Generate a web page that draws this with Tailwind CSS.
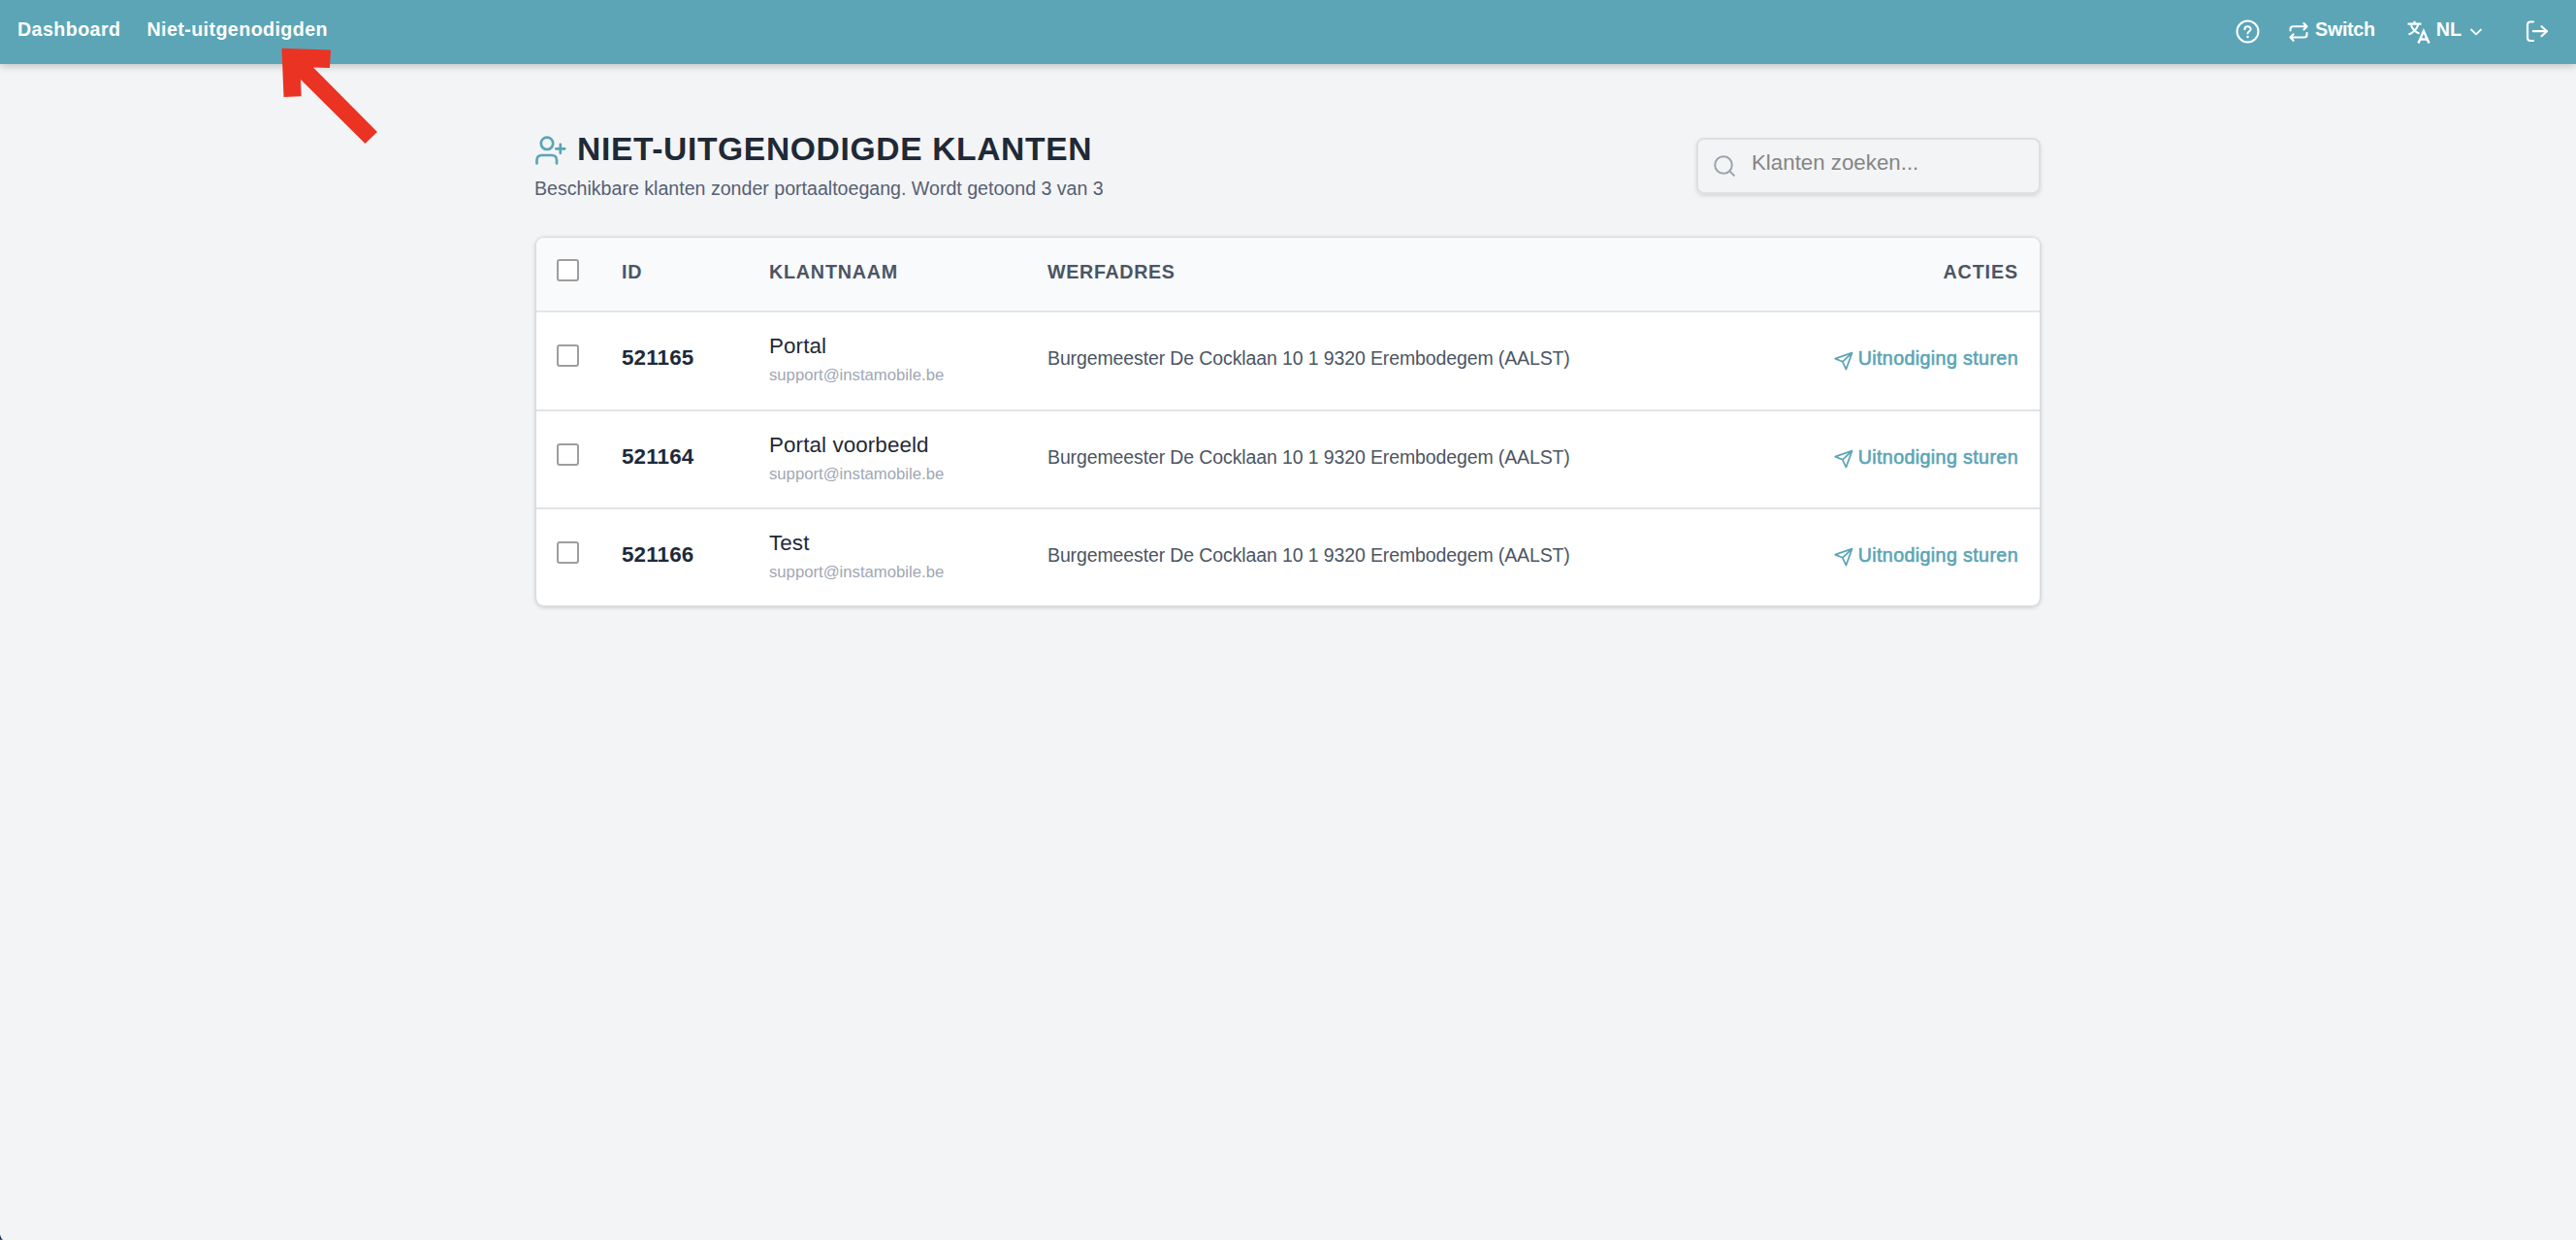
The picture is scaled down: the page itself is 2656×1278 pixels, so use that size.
<!DOCTYPE html>
<html lang="nl">
<head>
    <meta charset="UTF-8">
    <meta name="viewport" content="width=device-width, initial-scale=1.0">
    <title>Niet-uitgenodigde klanten</title>
    <script src="https://cdn.jsdelivr.net/npm/@tailwindcss/browser@4"></script>
</head>
<body class="relative h-[1278px] overflow-hidden bg-[#f3f4f6] font-['Liberation_Sans',Arial,sans-serif] text-[#1f2937]">

    <!-- icons -->
    <svg class="hidden">
        <symbol id="send" viewBox="0 0 20 20">
            <path d="M18.6 1.6 1.2 7.6l7.6 3.2 3.6 7.8zM18.6 1.6 8.8 10.8M1.2 7.6 18.6 1.6" fill="none" stroke="currentColor" stroke-width="1.7" stroke-linejoin="round"/>
        </symbol>
    </svg>

    <header class="flex h-[66px] items-center justify-between bg-[#5ba5b6] pr-7 pl-[18px] text-[19.7px] font-bold text-white shadow-[0_2px_8px_rgba(0,0,0,0.22)]">
        <nav class="flex gap-[27px] pb-[5px] tracking-[0.4px]">
            <a href="#">Dashboard</a>
            <a href="#">Niet-uitgenodigden</a>
        </nav>
        <div class="flex items-center">
            <svg class="mr-[30px] size-[25px]" viewBox="0 0 26 26" fill="none" stroke="currentColor" stroke-width="2.1" stroke-linecap="round">
                <circle cx="13" cy="13" r="11.4"/>
                <path d="M9.8 10.6c0-4 6.4-4 6.4-.2 0 2.5-3.2 2.6-3.2 4.6"/>
                <path d="M13 18.6v.1" stroke-width="2.6"/>
            </svg>
            <a href="#" class="flex items-center">
                <svg class="mr-[7px] h-[22px] w-5" viewBox="0 0 20 22" fill="none" stroke="currentColor" stroke-width="2.1" stroke-linecap="round" stroke-linejoin="round">
                    <path d="M1.5 9.500V8q0-2.800 2.800-2.800H18M15.400 2 18.500 5.200l-3.100 3.200"/>
                    <path d="M18.500 12v1.700q0 2.800-2.800 2.800H2M4.600 13.300 1.500 16.500l3.100 3.300"/>
                </svg>
                <span class="pb-[5px] tracking-[-0.3px]">Switch</span>
            </a>
            <a href="#" class="ml-[33px] flex items-center">
                <svg class="mr-[6px] size-6" viewBox="0 0 24 24" fill="none" stroke="currentColor" stroke-width="2.1">
                    <path d="M.5 3.600h14M7.500.7v2.900M3.800 4.200c1.300 4.600 4.600 7.800 8.700 9.400M11.300 4.200C9.900 9 6.200 12.600 1.500 14.400"/>
                    <path d="m11.500 23.500 5.400-12.600 5.600 12.600M13.300 19.500h7.400" stroke-width="2.4"/>
                </svg>
                <span class="pb-[5px]">NL</span>
                <svg class="ml-2 h-2 w-[14px]" viewBox="0 0 14 8" fill="none" stroke="currentColor" stroke-width="1.8" stroke-linecap="round" stroke-linejoin="round"><path d="m2 1.500 5 4.800 5-4.800"/></svg>
            </a>
            <svg class="ml-[44px] h-[23px] w-6" viewBox="0 0 24 23" fill="none" stroke="currentColor" stroke-width="2.2" stroke-linecap="round" stroke-linejoin="round">
                <path d="M8 1.500H5Q2 1.500 2 4.500v13.500q0 3 3 3H8M7.800 11.200h14M16.500 6.200l5.500 5-5.500 5"/>
            </svg>
        </div>
    </header>

    <main class="mx-auto w-[1552px] pt-[68px]">
        <div class="flex items-start justify-between">
            <div>
                <h1 class="flex h-10 items-center text-[33.6px] leading-[40px] font-bold tracking-[0.65px] whitespace-nowrap">
                    <svg class="mt-1 mr-[10px] h-9 w-[33px] text-[#5ba5b6]" viewBox="0 0 33 36" fill="none" stroke="currentColor" stroke-width="2.7" stroke-linecap="round">
                        <circle cx="12" cy="9.8" r="6.2"/>
                        <path d="M1.500 30.500v-3.300q0-5.200 5.200-5.200h10.100q5.200 0 5.200 5.200v3.300M25.800 10.800v9M21.300 15.300h9"/>
                    </svg>
                    NIET-UITGENODIGDE KLANTEN
                </h1>
                <p class="mt-[6px] -ml-px text-[19.6px] leading-[28px] text-[#566072]">Beschikbare klanten zonder portaaltoegang. Wordt getoond 3 van 3</p>
            </div>
            <label class="mt-2 flex h-[58px] w-[355px] items-center rounded-lg border-2 border-[#dddfe2] pl-4 shadow-[0_2px_4px_rgba(0,0,0,0.12)]">
                <svg class="mr-[17px] size-[22px] text-[#9ca3af]" viewBox="0 0 22 22" fill="none" stroke="currentColor" stroke-width="2" stroke-linecap="round"><circle cx="10" cy="10" r="8.8"/><path d="m16.500 16.500 4.400 4.400"/></svg>
                <input type="text" placeholder="Klanten zoeken..." class="mb-[6px] w-[270px] text-[22.3px] outline-none placeholder:text-[#858585]">
            </label>
        </div>

        <div class="mt-9 overflow-hidden rounded-[9px] border border-[#d8dadd] bg-white shadow-[0_1px_4px_rgba(0,0,0,0.18)]">
            <div class="grid h-[77px] grid-cols-[67px_152px_287px_1fr_auto] items-center border-b-2 border-[#e2e4e7] bg-[#f9fafc] pr-[22px] pl-[21px] text-[19.7px] font-bold text-[#4b5563]">
                <input type="checkbox" class="mb-[9px] size-[23px] appearance-none rounded-[3px] border-2 border-[#9e9e9e] bg-white">
                <span class="pb-[3px] tracking-[0.9px]">ID</span>
                <span class="pb-[3px] tracking-[0.8px]">KLANTNAAM</span>
                <span class="pb-[3px] tracking-[0.65px]">WERFADRES</span>
                <span class="pb-[3px] tracking-[0.9px]">ACTIES</span>
            </div>

            <div class="grid h-[102px] grid-cols-[67px_152px_287px_1fr_auto] items-center border-b-2 border-[#e2e3e5] pr-[22px] pl-[21px]">
                <input type="checkbox" class="mb-[11px] size-[23px] appearance-none rounded-[3px] border-2 border-[#9e9e9e] bg-white">
                <span class="pb-[6px] text-[22.4px] font-bold tracking-[0.15px]">521165</span>
                <div class="leading-[30px]">
                    <p class="text-[22.4px] tracking-[0.1px]">Portal</p>
                    <p class="text-[16.7px] text-[#a0a7b4]">support@instamobile.be</p>
                </div>
                <span class="pb-1 text-[19.5px] tracking-[-0.12px] text-[#4b5563]">Burgemeester De Cocklaan 10 1 9320 Erembodegem (AALST)</span>
                <a href="#" class="flex items-center text-[19.7px] tracking-[0.37px] text-[#5ba5b6] [-webkit-text-stroke:0.6px]">
                    <svg class="mr-[5px] size-5"><use href="#send"/></svg>
                    <span class="pb-1">Uitnodiging sturen</span>
                </a>
            </div>

            <div class="grid h-[101px] grid-cols-[67px_152px_287px_1fr_auto] items-center border-b-2 border-[#e2e3e5] pr-[22px] pl-[21px]">
                <input type="checkbox" class="mb-[11px] size-[23px] appearance-none rounded-[3px] border-2 border-[#9e9e9e] bg-white">
                <span class="pb-[6px] text-[22.4px] font-bold tracking-[0.15px]">521164</span>
                <div class="leading-[30px]">
                    <p class="text-[22.4px] tracking-[0.1px]">Portal voorbeeld</p>
                    <p class="text-[16.7px] text-[#a0a7b4]">support@instamobile.be</p>
                </div>
                <span class="pb-1 text-[19.5px] tracking-[-0.12px] text-[#4b5563]">Burgemeester De Cocklaan 10 1 9320 Erembodegem (AALST)</span>
                <a href="#" class="flex items-center text-[19.7px] tracking-[0.37px] text-[#5ba5b6] [-webkit-text-stroke:0.6px]">
                    <svg class="mr-[5px] size-5"><use href="#send"/></svg>
                    <span class="pb-1">Uitnodiging sturen</span>
                </a>
            </div>

            <div class="grid h-[99px] grid-cols-[67px_152px_287px_1fr_auto] items-center pr-[22px] pl-[21px]">
                <input type="checkbox" class="mb-[11px] size-[23px] appearance-none rounded-[3px] border-2 border-[#9e9e9e] bg-white">
                <span class="pb-[6px] text-[22.4px] font-bold tracking-[0.15px]">521166</span>
                <div class="leading-[30px]">
                    <p class="text-[22.4px] tracking-[0.1px]">Test</p>
                    <p class="text-[16.7px] text-[#a0a7b4]">support@instamobile.be</p>
                </div>
                <span class="pb-1 text-[19.5px] tracking-[-0.12px] text-[#4b5563]">Burgemeester De Cocklaan 10 1 9320 Erembodegem (AALST)</span>
                <a href="#" class="flex items-center text-[19.7px] tracking-[0.37px] text-[#5ba5b6] [-webkit-text-stroke:0.6px]">
                    <svg class="mr-[5px] size-5"><use href="#send"/></svg>
                    <span class="pb-1">Uitnodiging sturen</span>
                </a>
            </div>
        </div>
    </main>

    <!-- pointer to the active menu item -->
    <svg class="absolute top-[49px] left-[290px] h-[100px] w-[100px]" viewBox="0 0 100 100">
        <path d="M.5.7 51 2.500 50 21 33 20.500 99 87 86.500 99 20 33 20.700 50.300 2.500 51z" fill="#eb3323"/>
    </svg>
    <svg class="absolute bottom-0 left-0 h-[6px] w-[3px]" viewBox="0 0 4 7"><path d="M0 0Q1 5 4 7H0z" fill="#12304f"/></svg>
</body>
</html>
